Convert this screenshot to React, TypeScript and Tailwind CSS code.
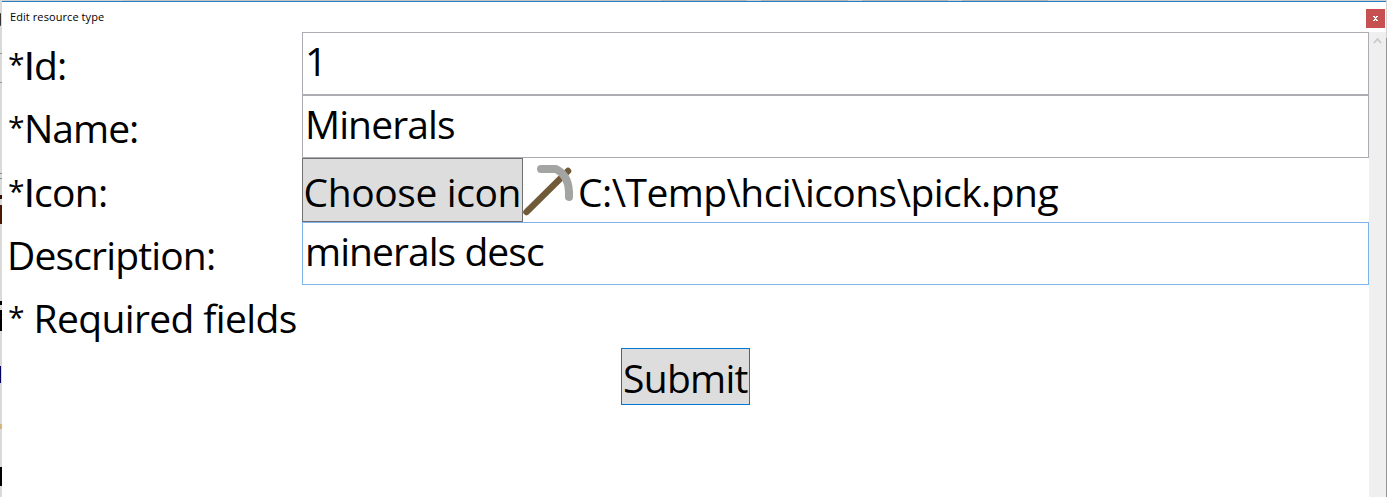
import React from "react";

function Field({ value, focused, spacing }: { value: string; focused?: boolean; spacing: string }) {
  return (
    <div className={`h-[63px] flex-1 border bg-white pl-[2px] leading-[55px] ${spacing} ${focused ? "border-[#7eb4ea]" : "border-[#abadb3]"}`}>
      {value}
    </div>
  );
}

function Label({ required, children, spacing }: { required?: boolean; children: React.ReactNode; spacing: string }) {
  return (
    <div className={`flex w-[300px] shrink-0 leading-[66px] whitespace-pre ${required ? "pl-[6px]" : "pl-[5px]"} ${spacing}`}>
      {required && <span className="w-[16px] shrink-0 text-[30px] leading-[63px]">*</span>}
      <span>{children}</span>
    </div>
  );
}

function CapitalI() {
  return <span className="font-['Roboto',sans-serif]">I</span>;
}

function PickIcon() {
  return (
    <svg className="mt-px h-[60px] w-[54px] shrink-0" viewBox="523 159 54 60" fill="none" strokeLinecap="round">
      <path d="M526.5 212 L568 171" stroke="#705a38" strokeWidth="6.5" />
      <path d="M541 169 L556 169 Q570 176 569 197" stroke="#a3a5a3" strokeWidth="8" strokeLinejoin="round" />
    </svg>
  );
}

function BackgroundEdge() {
  return (
    <div className="flex h-full w-[2px] shrink-0 flex-col overflow-hidden bg-[#dadada]">
      <div className="mt-[13px] h-[13px] w-px rounded-l bg-[#333]" />
      <div className="mt-[27px] h-px bg-[#999]" />
      <div className="mt-[28px] h-px bg-[#999]" />
      <div className="mt-[90px] h-px bg-[#888]" />
      <div className="mt-[4px] h-px bg-[#888]" />
      <div className="mt-[16px] h-[4px] bg-[#321000]" />
      <div className="mt-[6px] h-[19px] bg-[#4a1800]" />
      <div className="mt-[77px] h-[4px] bg-black" />
      <div className="mt-[5px] h-[21px] bg-black" />
      <div className="mt-[35px] h-[17px] w-px bg-[#000060]" />
      <div className="mt-[41px] h-[5px] w-[2px] bg-[#d8b67a]" />
      <div className="mt-[38px] h-[19px] bg-black" />
    </div>
  );
}

export default function App() {
  return (
    <div className="flex h-[497px] w-[1387px] overflow-hidden bg-white font-['Open_Sans',sans-serif] text-black">
      <BackgroundEdge />
      <div className="flex h-full w-[1384px] shrink-0 flex-col">
        <div className="flex h-px shrink-0 bg-[#d0d0d0]">
          <div className="ml-[121px] w-[538px] bg-[#c4c4c4]" />
          <div className="w-[86px] bg-[#b5b5b5]" />
          <div className="ml-[14px] w-[87px] bg-[#b5b5b5]" />
          <div className="ml-[14px] w-[86px] bg-[#b5b5b5]" />
          <div className="ml-[14px] w-[86px] bg-[#b5b5b5]" />
        </div>
        <div className="h-px shrink-0 bg-[#2a7fc4]" />
        <header className="flex h-[30px] shrink-0 justify-between">
          <span className="pl-[8px] text-[11px] leading-[30px] tracking-[0.08px]">Edit resource type</span>
          <button className="mt-[7px] mr-px flex h-[19px] w-[19px] items-center justify-center bg-[#c75050]" aria-label="Close">
            <svg className="h-[5px] w-[5px]" viewBox="0 0 5 5" shapeRendering="crispEdges" fill="white">
              <path d="M0 0h2v1H0zM3 0h2v1H3zM1 1h3v1H1zM2 2h1v1H2zM1 3h3v1H1zM0 4h2v1H0zM3 4h2v1H3z" />
            </svg>
          </button>
        </header>
        <div className="flex min-h-0 flex-1">
          <main className="w-[1367px] shrink-0 text-[39px]">
            <div className="flex h-[63px]">
              <Label required spacing="tracking-[-0.7px]"><CapitalI />d:</Label>
              <Field value="1" spacing="tracking-normal" />
            </div>
            <div className="flex h-[63px]">
              <Label required spacing="tracking-[-1px]">Name:</Label>
              <Field value="Minerals" spacing="tracking-[-0.9px]" />
            </div>
            <div className="flex h-[64px]">
              <div className="flex pt-px"><Label required spacing="tracking-[-0.7px]"><CapitalI />con:</Label></div>
              <button className="h-[64px] w-[221px] shrink-0 border border-[#707070] bg-[#dddddd] pl-[0.5px] text-left leading-[66px] tracking-[-0.4px] whitespace-nowrap">Choose icon</button>
              <PickIcon />
              <span className="pl-px leading-[68px] tracking-[-0.55px] whitespace-nowrap">C:\Temp\hci\icons\pick.png</span>
            </div>
            <div className="flex h-[63px]">
              <Label spacing="tracking-[-0.85px]">Description:</Label>
              <Field value="minerals desc" spacing="tracking-[-0.95px]" focused />
            </div>
            <div className="flex h-[63px]">
              <Label required spacing="tracking-[-0.63px]"> Required fields</Label>
            </div>
            <div className="flex justify-center">
              <button className="h-[57px] w-[129px] border border-[#0078d7] bg-[#dddddd] pl-px text-left leading-[58px] tracking-[-0.7px] whitespace-nowrap">Submit</button>
            </div>
          </main>
          <aside className="flex w-[17px] shrink-0 justify-center bg-[#efefef]">
            <svg className="mt-[5px] h-[8px] w-[9px]" viewBox="0 0 9 8" fill="none" stroke="#c8c8c8" strokeWidth="1.8">
              <path d="M1 6 L4.5 2 L8 6" />
            </svg>
          </aside>
        </div>
      </div>
      <div className="flex h-full w-px shrink-0 flex-col bg-[#969696]"><div className="h-[38px] bg-[#d4d4d4]" /></div>
    </div>
  );
}
